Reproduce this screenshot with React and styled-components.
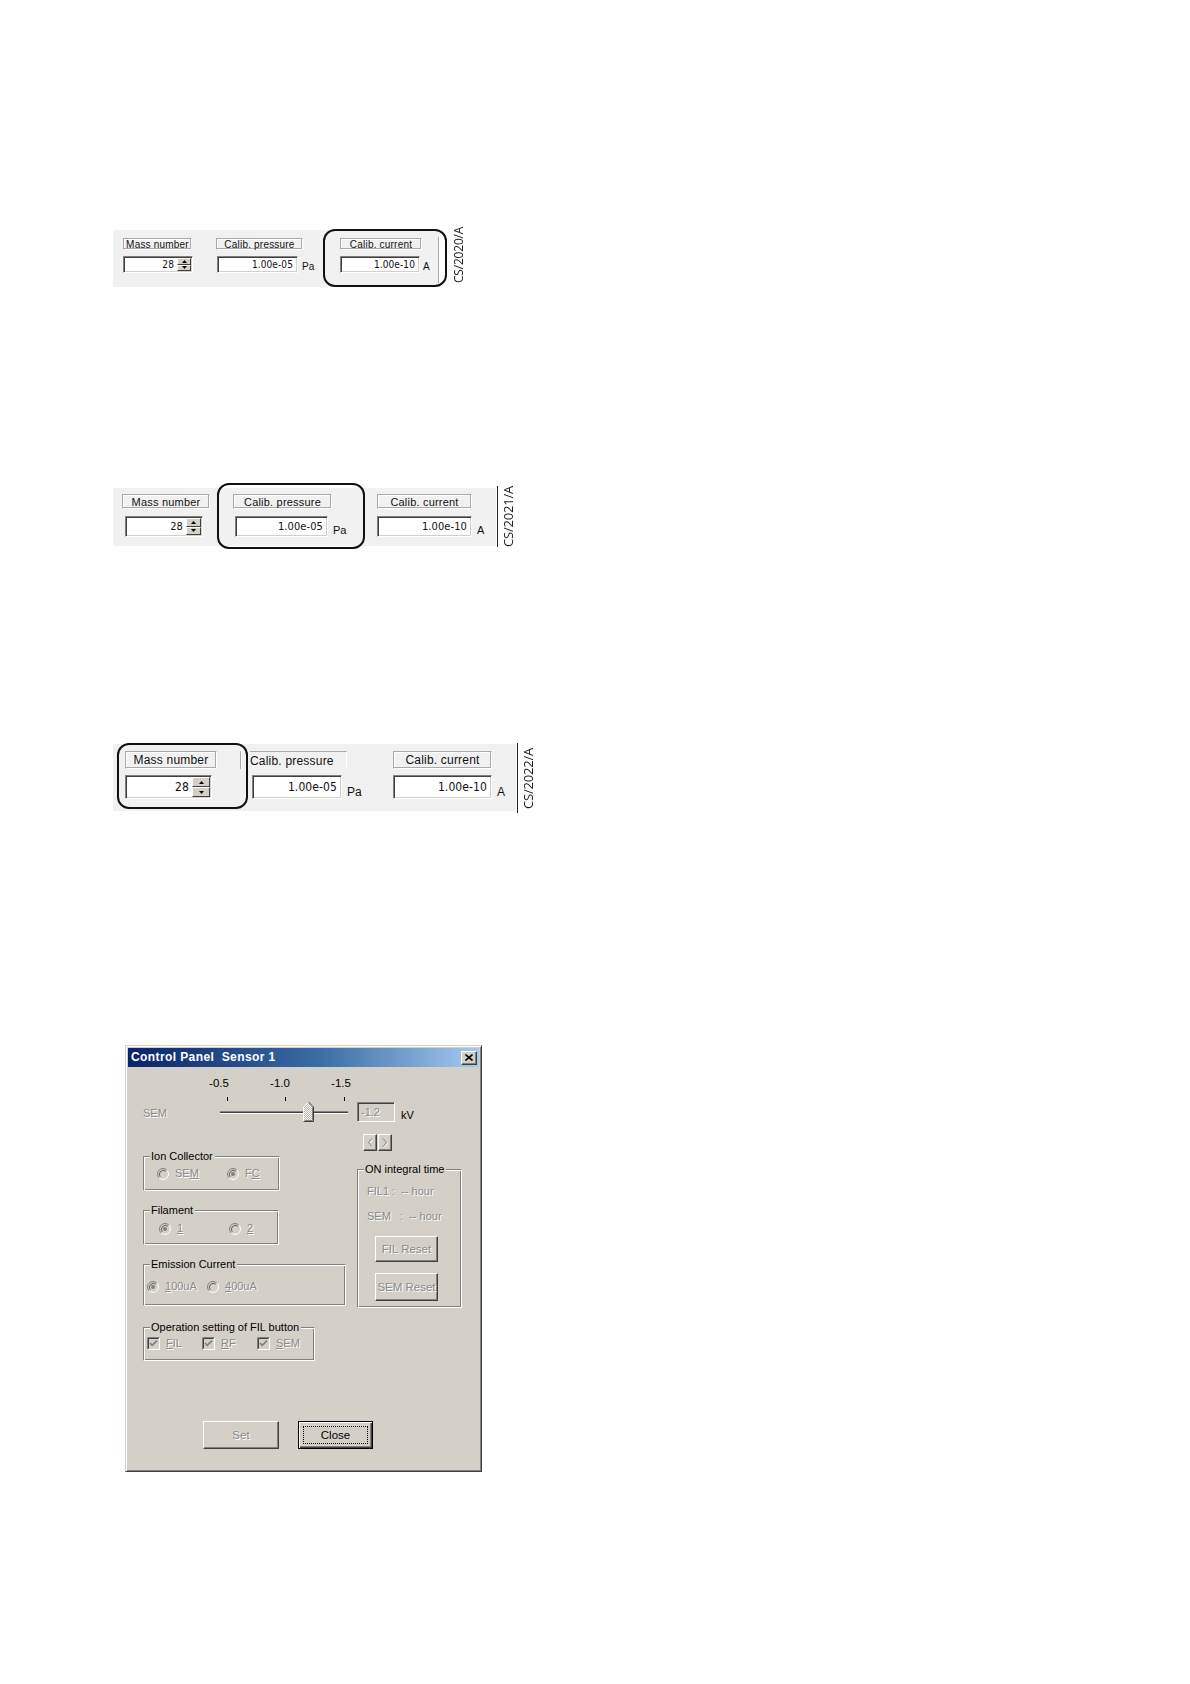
import React from 'react';
import styled, { createGlobalStyle, css } from 'styled-components';

const Global = createGlobalStyle`
  html, body { margin: 0; padding: 0; background: #fff; }
  body { font-family: "Liberation Sans", Arial, sans-serif; color: #000; }
`;

const disabledText = css`
  color: #8a8a8a;
  text-shadow: 1px 1px 0 #fff;
`;

const Page = styled.div`
  display: flow-root;
  width: 1190px;
  min-height: 1684px;
  box-sizing: border-box;
  padding-left: 113px;
`;

/* ---------- figure strips ---------- */

const Figure = styled.div`
  display: flex;
  align-items: flex-start;
  margin-top: ${p => p.$mt}px;
`;

const Strip = styled.div`
  position: relative;
  flex: none;
  margin-top: ${p => p.$top}px;
  width: ${p => p.$w}px;
  height: ${p => p.$h}px;
  box-sizing: border-box;
  padding-left: ${p => p.$pad}px;
  background: #f1f1f1;
  display: flex;
  align-items: flex-start;
  font-size: ${p => p.$fs}px;
  color: #111;
`;

const Field = styled.div`
  flex: none;
  width: ${p => (p.$w ? `${p.$w}px` : 'auto')};
  padding-top: ${p => p.$top}px;
  display: flex;
  flex-direction: column;
`;

const LabelRow = styled.div`
  display: flex;
  align-items: stretch;
`;

const FieldLabel = styled.div`
  width: ${p => p.$w}px;
  height: ${p => p.$h}px;
  box-sizing: border-box;
  border: 1px solid #a9a9a9;
  border-right-color: #fff;
  border-bottom-color: #fff;
  box-shadow: inset -1px -1px 0 #a9a9a9, inset 1px 1px 0 #fff;
  display: flex;
  align-items: center;
  justify-content: center;
  white-space: nowrap;
  letter-spacing: 0.2px;
  ${p =>
    p.$open &&
    css`
      border-left: none;
      border-bottom: none;
      box-shadow: none;
      justify-content: flex-start;
    `}
`;

const LabelTick = styled.div`
  width: 1px;
  margin-left: ${p => p.$ml}px;
  background: #a9a9a9;
  box-shadow: 1px 0 0 #fff;
`;

const InputRow = styled.div`
  display: flex;
  align-items: flex-end;
  margin-left: ${p => p.$dx}px;
  margin-top: ${p => p.$mt}px;
`;

const InputBox = styled.div`
  width: ${p => p.$w}px;
  height: ${p => p.$h}px;
  box-sizing: border-box;
  background: #fff;
  border: 1px solid;
  border-color: #808080 #fff #fff #808080;
  box-shadow: inset 1px 1px 0 #404040, inset -1px -1px 0 #d4d0c8;
  display: flex;
  align-items: stretch;
  justify-content: flex-end;
  padding: 1px;
`;

const InputValue = styled.div`
  display: flex;
  align-items: center;
  padding-right: 3px;
  font-family: "DejaVu Sans Condensed", "Liberation Sans", sans-serif;
  letter-spacing: 0.1px;
`;

const Spin = styled.div`
  width: ${p => p.$w}px;
  display: flex;
  flex-direction: column;
`;

const SpinButton = styled.div`
  flex: 1;
  background: #d4d0c8;
  border: 1px solid;
  border-color: #fff #404040 #404040 #fff;
  display: flex;
  align-items: center;
  justify-content: center;
`;

const Unit = styled.div`
  margin-left: ${p => p.$ml}px;
  line-height: 1;
  padding-bottom: 1px;
`;

const Separator = styled.div`
  width: 1px;
  height: ${p => p.$h}px;
  margin-top: ${p => p.$top}px;
  background: #a9a9a9;
  box-shadow: 1px 0 0 #fff;
`;

const Highlight = styled.div`
  position: absolute;
  left: ${p => p.$x}px;
  top: ${p => p.$y}px;
  width: ${p => p.$w}px;
  height: ${p => p.$h}px;
  box-sizing: border-box;
  border: 2px solid #111;
  border-radius: 12px;
  pointer-events: none;
`;

const Side = styled.div`
  flex: none;
  display: flex;
  align-items: stretch;
  margin-top: ${p => p.$top}px;
  margin-left: ${p => p.$ml}px;
  height: ${p => p.$h}px;
`;

const Rule = styled.div`
  width: 1px;
  background: #222;
`;

const Code = styled.div`
  writing-mode: vertical-rl;
  transform: rotate(180deg);
  margin-left: ${p => p.$ml}px;
  padding-top: ${p => p.$pb}px;
  font-family: "Open Sans", "Noto Sans", sans-serif;
  font-size: ${p => p.$fs}px;
  line-height: 13px;
  letter-spacing: -0.2px;
  color: #1a1a1a;
  white-space: nowrap;
`;

const Arrow = ({ up }) => (
  <svg width="5" height="3" viewBox="0 0 5 3">
    {up ? <path d="M2.5 0 L5 3 L0 3 Z" fill="#000" /> : <path d="M0 0 L5 0 L2.5 3 Z" fill="#000" />}
  </svg>
);

const Input = ({ w, h, value, spin }) => (
  <InputBox $w={w} $h={h}>
    <InputValue>{value}</InputValue>
    {spin && (
      <Spin $w={spin}>
        <SpinButton>
          <Arrow up />
        </SpinButton>
        <SpinButton>
          <Arrow />
        </SpinButton>
      </Spin>
    )}
  </InputBox>
);

const CalibStrip = ({ cfg }) => (
  <Figure $mt={cfg.mt}>
    <Strip $top={cfg.top} $w={cfg.w} $h={cfg.h} $pad={cfg.pad} $fs={cfg.fs}>
      {cfg.fields.map((f, i) => (
        <Field key={i} $w={f.col} $top={cfg.ftop}>
          <LabelRow>
            <FieldLabel $w={f.lw} $h={cfg.lh} $open={f.open}>
              {f.label}
            </FieldLabel>
            {f.tick && <LabelTick $ml={f.tick} />}
          </LabelRow>
          <InputRow $dx={f.dx} $mt={cfg.gap}>
            <Input w={f.iw} h={cfg.ih} value={f.value} spin={f.spin} />
            {f.unit && <Unit $ml={f.uml}>{f.unit}</Unit>}
          </InputRow>
        </Field>
      ))}
      {cfg.sep && <Separator $h={cfg.sep.h} $top={cfg.sep.top} />}
      <Highlight $x={cfg.hl.x} $y={cfg.hl.y} $w={cfg.hl.w} $h={cfg.hl.h} />
    </Strip>
    <Side $top={cfg.side.top} $ml={cfg.side.ml} $h={cfg.side.h}>
      {cfg.side.rule && <Rule />}
      <Code $ml={cfg.side.rule ? 4 : 0} $fs={cfg.side.fs} $pb={cfg.side.pb}>
        {cfg.code}
      </Code>
    </Side>
  </Figure>
);

const strips = [
  {
    mt: 223, top: 7, w: 327, h: 57, pad: 10, fs: 10, ftop: 8, lh: 12, ih: 17, gap: 6,
    code: 'CS/2020/A',
    fields: [
      { col: 93, label: 'Mass number', lw: 69, dx: 0, iw: 70, value: '28', spin: 14 },
      { col: 124, label: 'Calib. pressure', lw: 87, dx: 1, iw: 81, value: '1.00e-05', unit: 'Pa', uml: 4 },
      { col: 98, label: 'Calib. current', lw: 82, dx: 0, iw: 80, value: '1.00e-10', unit: 'A', uml: 3 },
    ],
    sep: { h: 46, top: 7 },
    hl: { x: 210, y: -1, w: 124, h: 58 },
    side: { top: 0, ml: 12, h: 60, rule: false, fs: 12, pb: 0 },
  },
  {
    mt: 196, top: 5, w: 383, h: 58, pad: 9, fs: 11, ftop: 6, lh: 15, ih: 21, gap: 7,
    code: 'CS/2021/A',
    fields: [
      { col: 111, label: 'Mass number', lw: 88, dx: 3, iw: 78, value: '28', spin: 15 },
      { col: 144, label: 'Calib. pressure', lw: 99, dx: 2, iw: 93, value: '1.00e-05', unit: 'Pa', uml: 5 },
      { col: 0, label: 'Calib. current', lw: 95, dx: 0, iw: 95, value: '1.00e-10', unit: 'A', uml: 5 },
    ],
    hl: { x: 104, y: -5, w: 148, h: 66 },
    side: { top: 3, ml: 1, h: 61, rule: true, fs: 13, pb: 0 },
  },
  {
    mt: 196, top: 1, w: 403, h: 67, pad: 12, fs: 12, ftop: 7, lh: 18, ih: 24, gap: 6,
    code: 'CS/2022/A',
    fields: [
      { col: 125, label: 'Mass number', lw: 92, tick: 23, dx: 0, iw: 87, value: '28', spin: 18 },
      { col: 143, label: 'Calib. pressure', lw: 97, open: true, dx: 2, iw: 90, value: '1.00e-05', unit: 'Pa', uml: 5 },
      { col: 0, label: 'Calib. current', lw: 99, dx: 0, iw: 99, value: '1.00e-10', unit: 'A', uml: 5 },
    ],
    hl: { x: 4, y: -1, w: 131, h: 66 },
    side: { top: 0, ml: 1, h: 70, rule: true, fs: 13, pb: 4 },
  },
];

/* ---------- dialog ---------- */

const Window = styled.div`
  margin-top: 232px;
  margin-left: 12px;
  width: 357px;
  height: 427px;
  box-sizing: border-box;
  background: #d4d0c8;
  border: 1px solid;
  border-color: #d4d0c8 #404040 #404040 #d4d0c8;
  box-shadow: inset 1px 1px 0 #fff, inset -1px -1px 0 #808080;
  padding: 2px;
  display: flex;
  flex-direction: column;
  font-size: 11px;
  line-height: 13px;
`;

const TitleBar = styled.div`
  height: 19px;
  flex: none;
  display: flex;
  align-items: center;
  justify-content: space-between;
  padding: 0 2px 0 3px;
  background: linear-gradient(90deg, #0a246a 0%, #3a6ea5 55%, #a6caf0 100%);
  color: #fff;
  font-weight: bold;
  font-size: 12px;
  white-space: pre;
  letter-spacing: 0.4px;
`;

const CloseBox = styled.div`
  width: 16px;
  height: 14px;
  box-sizing: border-box;
  background: #d4d0c8;
  border: 1px solid;
  border-color: #fff #404040 #404040 #fff;
  box-shadow: inset -1px -1px 0 #808080;
  display: flex;
  align-items: center;
  justify-content: center;
`;

const Body = styled.div`
  padding-left: 15px;
  display: flex;
  flex-direction: column;
`;

const SliderSection = styled.div`
  display: flex;
  align-items: flex-end;
  margin-top: 10px;
`;

const SemLabel = styled.div`
  width: 77px;
  margin-bottom: 2px;
  ${disabledText};
`;

const SliderWidget = styled.div`
  width: 128px;
  display: flex;
  flex-direction: column;
`;

const TickLabels = styled.div`
  display: grid;
  grid-template-columns: repeat(3, 30px);
  column-gap: 31px;
  margin-left: -16px;
  height: 13px;
  font-size: 11.5px;
`;

const TickLabel = styled.div`
  text-align: center;
`;

const SliderSvg = styled.svg`
  display: block;
  margin-top: 7px;
`;

const ValueBox = styled.div`
  margin-left: 9px;
  width: 38px;
  height: 20px;
  box-sizing: border-box;
  border: 1px solid;
  border-color: #808080 #fff #fff #808080;
  box-shadow: inset 1px 1px 0 #404040, inset -1px -1px 0 #d4d0c8;
  padding: 3px 0 0 3px;
  ${disabledText};
`;

const KvLabel = styled.div`
  margin-left: 6px;
  margin-bottom: 0;
`;

const Columns = styled.div`
  display: grid;
  grid-template-columns: 214px 105px;
`;

const LeftCol = styled.div`
  display: flex;
  flex-direction: column;
`;

const RightCol = styled.div`
  display: flex;
  flex-direction: column;
`;

const Group = styled.div`
  position: relative;
  margin-top: ${p => p.$mt}px;
  width: ${p => p.$w}px;
  height: ${p => p.$h}px;
  box-sizing: border-box;
  border: 1px solid #808080;
  border-right-color: #fff;
  border-bottom-color: #fff;
  box-shadow: inset 1px 1px 0 #fff, inset -1px -1px 0 #808080;
  padding: ${p => p.$pt}px 0 0 ${p => p.$pl}px;
`;

const GroupTitle = styled.div`
  position: absolute;
  left: 6px;
  top: -7px;
  padding: 0 2px 0 1px;
  background: #d4d0c8;
  color: #000;
  white-space: nowrap;
`;

const Options = styled.div`
  display: flex;
  align-items: center;
`;

const Option = styled.div`
  width: ${p => p.$w}px;
  flex: none;
  display: flex;
  align-items: center;
  gap: 6px;
  white-space: nowrap;
  ${disabledText};
  u {
    text-decoration: underline;
  }
`;

const ArrowPair = styled.div`
  display: flex;
  margin-top: 12px;
  margin-left: 6px;
`;

const SmallButton = styled.div`
  width: 14px;
  height: 17px;
  box-sizing: border-box;
  background: #d4d0c8;
  border: 1px solid;
  border-color: #fff #404040 #404040 #fff;
  box-shadow: inset -1px -1px 0 #808080;
  display: flex;
  align-items: center;
  justify-content: center;
  margin-right: 1px;
`;

const InfoLine = styled.div`
  margin-top: ${p => p.$mt}px;
  padding-left: 9px;
  white-space: pre;
  ${disabledText};
`;

const Button = styled.div`
  width: ${p => p.$w}px;
  height: ${p => p.$h}px;
  box-sizing: border-box;
  margin-top: ${p => p.$mt || 0}px;
  margin-left: ${p => p.$ml || 0}px;
  background: #d4d0c8;
  border: 1px solid;
  border-color: #fff #404040 #404040 #fff;
  box-shadow: inset -1px -1px 0 #808080;
  display: flex;
  align-items: center;
  justify-content: center;
  font-size: 11.5px;
  ${p => (p.$disabled ? disabledText : 'color: #000;')};
  ${p =>
    p.$default &&
    css`
      border: 1px solid #000;
      box-shadow: inset 1px 1px 0 #fff, inset -1px -1px 0 #404040, inset -2px -2px 0 #808080;
    `}
`;

const FocusRing = styled.div`
  border: 1px dotted #000;
  width: calc(100% - 8px);
  height: calc(100% - 8px);
  box-sizing: border-box;
  display: flex;
  align-items: center;
  justify-content: center;
`;

const ButtonRow = styled.div`
  display: flex;
  margin-top: 60px;
  margin-left: 60px;
  gap: 19px;
`;

const RadioIcon = ({ checked }) => (
  <svg width="12" height="12" viewBox="0 0 12 12">
    <circle cx="6" cy="6" r="5.5" fill="#d4d0c8" />
    <path d="M9.89 2.11 A5.5 5.5 0 0 0 2.11 9.89" stroke="#808080" fill="none" />
    <path d="M2.11 9.89 A5.5 5.5 0 0 0 9.89 2.11" stroke="#fff" fill="none" />
    <path d="M8.8 3.2 A4 4 0 0 0 3.2 8.8" stroke="#404040" fill="none" strokeWidth="0.8" />
    {checked && <circle cx="6" cy="6" r="2" fill="#808080" />}
  </svg>
);

const CheckIcon = () => (
  <svg width="13" height="13" viewBox="0 0 13 13">
    <rect x="0.5" y="0.5" width="12" height="12" fill="#d4d0c8" stroke="#fff" />
    <path d="M0.5 12.5 V0.5 H12.5" stroke="#808080" fill="none" />
    <path d="M1.5 11.5 V1.5 H11.5" stroke="#404040" fill="none" />
    <path d="M3 6 L5.2 8.3 L10 3.6" stroke="#808080" strokeWidth="1.8" fill="none" />
  </svg>
);

const Chevron = ({ right }) => (
  <svg width="6" height="9" viewBox="0 0 6 9">
    <path
      d={right ? 'M1 0.5 L4.5 4.5 L1 8.5' : 'M5 0.5 L1.5 4.5 L5 8.5'}
      stroke="#fff"
      fill="none"
      transform="translate(1 1)"
    />
    <path d={right ? 'M1 0.5 L4.5 4.5 L1 8.5' : 'M5 0.5 L1.5 4.5 L5 8.5'} stroke="#808080" fill="none" />
  </svg>
);

const Slider = () => (
  <SliderSvg width="128" height="25" viewBox="0 0 128 25">
    <defs>
      <pattern id="dither" width="2" height="2" patternUnits="userSpaceOnUse">
        <rect width="2" height="2" fill="#fff" />
        <rect width="1" height="1" fill="#b8b4ac" />
        <rect x="1" y="1" width="1" height="1" fill="#b8b4ac" />
      </pattern>
    </defs>
    {[7, 65, 124].map(x => (
      <line key={x} x1={x + 0.5} y1="0" x2={x + 0.5} y2="4" stroke="#000" />
    ))}
    <line x1="0" y1="14.5" x2="128" y2="14.5" stroke="#808080" />
    <line x1="0" y1="15.5" x2="128" y2="15.5" stroke="#404040" />
    <line x1="0" y1="16.5" x2="128" y2="16.5" stroke="#fff" />
    <path d="M83.5 24.5 V10 L88.5 5 L93.5 10 V24.5 Z" fill="url(#dither)" stroke="none" />
    <path d="M83.5 24 V10 L88.5 5" stroke="#fff" fill="none" />
    <path d="M88.5 5 L93.5 10 V24.5 H83.5" stroke="#404040" fill="none" />
    <path d="M92.5 10.5 V23.5 H84.5" stroke="#808080" fill="none" />
  </SliderSvg>
);

const Dialog = () => (
  <Window>
    <TitleBar>
      <span>{'Control Panel  Sensor 1'}</span>
      <CloseBox>
        <svg width="8" height="7" viewBox="0 0 8 7">
          <path d="M0.5 0.5 L7.5 6.5 M7.5 0.5 L0.5 6.5" stroke="#000" strokeWidth="1.6" />
        </svg>
      </CloseBox>
    </TitleBar>
    <Body>
      <SliderSection>
        <SemLabel>SEM</SemLabel>
        <SliderWidget>
          <TickLabels>
            <TickLabel>-0.5</TickLabel>
            <TickLabel>-1.0</TickLabel>
            <TickLabel>-1.5</TickLabel>
          </TickLabels>
          <Slider />
        </SliderWidget>
        <ValueBox>-1.2</ValueBox>
        <KvLabel>kV</KvLabel>
      </SliderSection>

      <Columns>
        <LeftCol>
          <Group $mt={34} $w={137} $h={35} $pt={10} $pl={13}>
            <GroupTitle>Ion Collector</GroupTitle>
            <Options>
              <Option $w={70}>
                <RadioIcon />
                <span>
                  SE<u>M</u>
                </span>
              </Option>
              <Option $w={60}>
                <RadioIcon checked />
                <span>
                  F<u>C</u>
                </span>
              </Option>
            </Options>
          </Group>

          <Group $mt={19} $w={136} $h={35} $pt={11} $pl={15}>
            <GroupTitle>Filament</GroupTitle>
            <Options>
              <Option $w={70}>
                <RadioIcon checked />
                <span>
                  <u>1</u>
                </span>
              </Option>
              <Option $w={50}>
                <RadioIcon />
                <span>
                  <u>2</u>
                </span>
              </Option>
            </Options>
          </Group>

          <Group $mt={19} $w={203} $h={42} $pt={15} $pl={3}>
            <GroupTitle>Emission Current</GroupTitle>
            <Options>
              <Option $w={60}>
                <RadioIcon checked />
                <span>
                  <u>1</u>00uA
                </span>
              </Option>
              <Option $w={70}>
                <RadioIcon />
                <span>
                  <u>4</u>00uA
                </span>
              </Option>
            </Options>
          </Group>

          <Group $mt={21} $w={172} $h={34} $pt={9} $pl={3}>
            <GroupTitle>Operation setting of FIL button</GroupTitle>
            <Options>
              <Option $w={55}>
                <CheckIcon />
                <span>
                  <u>F</u>IL
                </span>
              </Option>
              <Option $w={55}>
                <CheckIcon />
                <span>
                  <u>R</u>F
                </span>
              </Option>
              <Option $w={55}>
                <CheckIcon />
                <span>
                  <u>S</u>EM
                </span>
              </Option>
            </Options>
          </Group>
        </LeftCol>

        <RightCol>
          <ArrowPair>
            <SmallButton>
              <Chevron />
            </SmallButton>
            <SmallButton>
              <Chevron right />
            </SmallButton>
          </ArrowPair>
          <Group $mt={18} $w={105} $h={139} $pt={15} $pl={0}>
            <GroupTitle>ON integral time</GroupTitle>
            <InfoLine $mt={0}>{'FIL1 :  -- hour'}</InfoLine>
            <InfoLine $mt={12}>{'SEM   :  -- hour'}</InfoLine>
            <Button $w={63} $h={26} $mt={13} $ml={17} $disabled>
              FIL Reset
            </Button>
            <Button $w={63} $h={28} $mt={11} $ml={17} $disabled>
              SEM Reset
            </Button>
          </Group>
        </RightCol>
      </Columns>

      <ButtonRow>
        <Button $w={76} $h={28} $disabled>
          Set
        </Button>
        <Button $w={75} $h={28} $default>
          <FocusRing>Close</FocusRing>
        </Button>
      </ButtonRow>
    </Body>
  </Window>
);

export default function App() {
  return (
    <>
      <Global />
      <Page>
        {strips.map(cfg => (
          <CalibStrip key={cfg.code} cfg={cfg} />
        ))}
        <Dialog />
      </Page>
    </>
  );
}
